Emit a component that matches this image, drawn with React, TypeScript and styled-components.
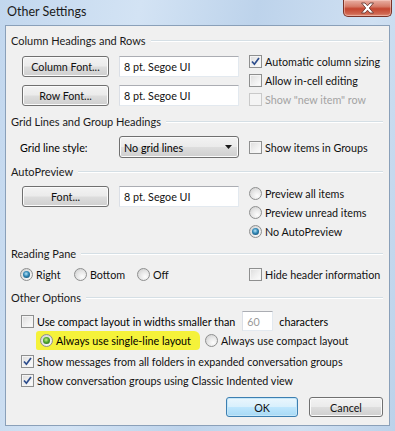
import { FC, ReactNode } from 'react'
import styled, { createGlobalStyle, css } from 'styled-components'

const GlobalStyle = createGlobalStyle`
  html, body {
    margin: 0;
    padding: 0;
    background: #ffffff;
  }

  body {
    font-family: Lato, 'Noto Sans', sans-serif;
    font-size: 10.75px;
    color: #000000;
  }
`

const Window = styled.div`
  width: 395px;
  height: 431px;
  display: flex;
  flex-direction: column;
  box-sizing: border-box;
  background: linear-gradient(100deg, #c2d7ee 0%, #d3e3f4 30%, #bdd3eb 55%, #cfe0f2 80%, #bcd2ea 100%);
`

const TitleBar = styled.div`
  height: 25px;
  display: flex;
  align-items: flex-start;
  flex-shrink: 0;
`

const Title = styled.span`
  padding: 4px 0 0 7px;
  font-size: 12.5px;
  color: #1b1b1b;
`

const CloseButton = styled.div`
  margin-left: auto;
  margin-right: 3px;
  width: 49px;
  height: 17px;
  box-sizing: border-box;
  border: 1px solid #7a3328;
  border-top: none;
  border-radius: 0 0 5px 5px;
  background: linear-gradient(180deg, #e9b0a4 0%, #d67c69 40%, #c4452f 55%, #cf6650 85%, #de8e78 100%);
  display: flex;
  align-items: center;
  justify-content: center;
  box-shadow: inset 0 0 0 1px rgba(255, 220, 210, 0.45);
`

const Client = styled.div`
  flex: 1;
  margin: 0 5px 5px 5px;
  border: 1px solid #8aa0b9;
  background: #f0f0f0;
  padding: 8px 6px 0 5px;
  display: flex;
  flex-direction: column;
`

const SectionHeader = styled.div<{ $gap: number }>`
  height: 14px;
  margin-top: ${({ $gap }) => $gap}px;
  display: flex;
  align-items: center;
  gap: 5px;
  line-height: 14px;
  font-size: 11px;
  color: #1a1a1a;

  &::after {
    content: '';
    flex: 1;
    height: 0;
    border-top: 1px solid #d5dfe5;
    border-bottom: 1px solid #ffffff;
  }
`

const Body = styled.div<{ $gap: number; $indent: number }>`
  margin-top: ${({ $gap }) => $gap}px;
  padding-left: ${({ $indent }) => $indent}px;
  display: flex;
  align-items: flex-start;
`

const LeftColumn = styled.div<{ $top: number }>`
  width: 217px;
  padding-top: ${({ $top }) => $top}px;
  margin-right: 10px;
  display: flex;
  flex-direction: column;
  gap: 8px;
  flex-shrink: 0;
`

const FontRow = styled.div`
  display: flex;
  gap: 10px;
`

const OptionList = styled.div`
  display: flex;
  flex-direction: column;
`

const OptionRow = styled.label<{ $disabled?: boolean }>`
  height: 19px;
  display: flex;
  align-items: center;
  gap: 3px;
  white-space: nowrap;
  color: ${({ $disabled }) => ($disabled ? '#a3a3a3' : '#111111')};
`

const PushButton = styled.button<{ $width: number; $height: number; $default?: boolean }>`
  width: ${({ $width }) => $width}px;
  height: ${({ $height }) => $height}px;
  padding: 0;
  font-family: Lato, 'Noto Sans', sans-serif;
  font-size: 10.75px;
  color: #111111;
  border: 1px solid #707070;
  border-radius: 3px;
  background: linear-gradient(180deg, #f3f3f3 0%, #ebebeb 48%, #dddddd 52%, #cfcfcf 100%);
  box-shadow: inset 0 0 0 1px #fbfbfb;
  flex-shrink: 0;

  ${({ $default }) =>
    $default &&
    css`
      border-color: #3c7fb1;
      background: linear-gradient(180deg, #eaf6fd 0%, #d9f0fc 48%, #bee6fd 52%, #a7d9f5 100%);
      box-shadow: inset 0 0 0 1px #c5e6f8;
    `}
`

const TextBox = styled.div<{ $width: number; $height: number; $muted?: boolean }>`
  width: ${({ $width }) => $width}px;
  height: ${({ $height }) => $height}px;
  box-sizing: border-box;
  padding-left: 4px;
  display: flex;
  align-items: center;
  background: #ffffff;
  border: 1px solid #e3e9ef;
  border-top-color: #abadb3;
  border-left-color: #dbdfe6;
  color: ${({ $muted }) => ($muted ? '#9a9a9a' : '#111111')};
  flex-shrink: 0;
`

const DropDown = styled.div`
  width: 120px;
  height: 22px;
  box-sizing: border-box;
  padding: 0 6px 0 4px;
  display: flex;
  align-items: center;
  justify-content: space-between;
  border: 1px solid #707070;
  border-radius: 3px;
  background: linear-gradient(180deg, #f3f3f3 0%, #ebebeb 48%, #dddddd 52%, #cfcfcf 100%);
  box-shadow: inset 0 0 0 1px #fbfbfb;
  flex-shrink: 0;
`

const FieldLabel = styled.span`
  width: 99px;
  flex-shrink: 0;
`

const InlineRow = styled.div<{ $height: number }>`
  height: ${({ $height }) => $height}px;
  display: flex;
  align-items: center;
  white-space: nowrap;
`

const RadioGroup = styled.div`
  width: 229px;
  display: flex;
  flex-shrink: 0;
`

const RadioSlot = styled.div<{ $width: number }>`
  width: ${({ $width }) => $width}px;
`

const Highlight = styled.div`
  width: 164px;
  height: 19px;
  margin-left: 15px;
  margin-right: 5px;
  padding-left: 4px;
  box-sizing: border-box;
  display: flex;
  align-items: center;
  gap: 3px;
  background: #f5f23a;
  border-radius: 3px 6px 4px 2px;
  white-space: nowrap;
`

const BoxFrame = styled.span<{ $disabled?: boolean }>`
  width: 13px;
  height: 13px;
  box-sizing: border-box;
  border: 1px solid ${({ $disabled }) => ($disabled ? '#c9c9c9' : '#8e8f8f')};
  background: ${({ $disabled }) =>
    $disabled ? '#f4f4f4' : 'linear-gradient(135deg, #dcdcdc 0%, #f0f0f0 55%, #fdfdfd 100%)'};
  box-shadow: inset 0 0 0 1px #f4f4f4;
  display: inline-flex;
  align-items: center;
  justify-content: center;
  flex-shrink: 0;
`

const RadioFrame = styled.span`
  width: 13px;
  height: 13px;
  box-sizing: border-box;
  border-radius: 50%;
  border: 1px solid #8e8f8f;
  background: radial-gradient(circle at 65% 70%, #fdfdfd 0%, #e6e6e6 50%, #c9c9c9 100%);
  display: inline-flex;
  align-items: center;
  justify-content: center;
  flex-shrink: 0;
`

const RadioDot = styled.span<{ $tint: 'blue' | 'green' }>`
  width: 7px;
  height: 7px;
  border-radius: 50%;
  background: ${({ $tint }) =>
    $tint === 'green'
      ? 'radial-gradient(circle at 45% 40%, #c9f08a 0%, #4fa62e 45%, #1f5a14 100%)'
      : 'radial-gradient(circle at 45% 40%, #b8e4f8 0%, #2f86b4 45%, #0e3c5e 100%)'};
`

const Gap = styled.span<{ $size: number }>`
  display: inline-block;
  width: ${({ $size }) => $size}px;
  flex-shrink: 0;
`

const Spacer = styled.div<{ $size: number }>`
  height: ${({ $size }) => $size}px;
`

const ButtonRow = styled.div`
  margin-top: 7px;
  display: flex;
  justify-content: flex-end;
  gap: 11px;
`

const CheckBox: FC<{ checked?: boolean; disabled?: boolean }> = ({ checked, disabled }) => (
  <BoxFrame $disabled={disabled}>
    {checked && (
      <svg width="9" height="9" viewBox="0 0 9 9">
        <path d="M1 4.5 L3.4 7.2 L8 1" fill="none" stroke="#2c4c8c" strokeWidth="1.7" />
      </svg>
    )}
  </BoxFrame>
)

const Radio: FC<{ checked?: boolean; tint?: 'blue' | 'green' }> = ({ checked, tint = 'blue' }) => (
  <RadioFrame>{checked && <RadioDot $tint={tint} />}</RadioFrame>
)

const CheckOption: FC<{ checked?: boolean; disabled?: boolean; children: ReactNode }> = ({
  checked,
  disabled,
  children
}) => (
  <OptionRow $disabled={disabled}>
    <CheckBox checked={checked} disabled={disabled} />
    {children}
  </OptionRow>
)

const RadioOption: FC<{ checked?: boolean; children: ReactNode }> = ({ checked, children }) => (
  <OptionRow>
    <Radio checked={checked} />
    {children}
  </OptionRow>
)

const App = () => (
  <>
    <GlobalStyle />
    <Window>
      <TitleBar>
        <Title>Other Settings</Title>
        <CloseButton>
          <svg width="15" height="12" viewBox="0 0 15 12">
            <path
              d="M1.5 1 H5 L7.5 3.8 L10 1 H13.5 L9.3 6 L13.5 11 H10 L7.5 8.2 L5 11 H1.5 L5.7 6 Z"
              fill="#ffffff"
              stroke="#6a3a34"
              strokeWidth="0.9"
              strokeLinejoin="round"
            />
          </svg>
        </CloseButton>
      </TitleBar>

      <Client>
        <SectionHeader $gap={0}>Column Headings and Rows</SectionHeader>
        <Body $gap={4} $indent={11}>
          <LeftColumn $top={4}>
            <FontRow>
              <PushButton $width={87} $height={21}>Column Font...</PushButton>
              <TextBox $width={120} $height={21}>8 pt. Segoe UI</TextBox>
            </FontRow>
            <FontRow>
              <PushButton $width={87} $height={21}>Row Font...</PushButton>
              <TextBox $width={120} $height={21}>8 pt. Segoe UI</TextBox>
            </FontRow>
          </LeftColumn>
          <OptionList>
            <CheckOption checked>Automatic column sizing</CheckOption>
            <CheckOption>Allow in-cell editing</CheckOption>
            <CheckOption disabled>Show "new item" row</CheckOption>
          </OptionList>
        </Body>

        <SectionHeader $gap={6}>Grid Lines and Group Headings</SectionHeader>
        <Body $gap={7} $indent={9}>
          <InlineRow $height={22}>
            <FieldLabel>Grid line style:</FieldLabel>
            <DropDown>
              No grid lines
              <svg width="7" height="4" viewBox="0 0 7 4">
                <path d="M0 0 H7 L3.5 4 Z" fill="#1a1a1a" />
              </svg>
            </DropDown>
            <Gap $size={10} />
            <OptionRow>
              <CheckBox />
              Show items in Groups
            </OptionRow>
          </InlineRow>
        </Body>

        <SectionHeader $gap={7}>AutoPreview</SectionHeader>
        <Body $gap={5} $indent={11}>
          <LeftColumn $top={2}>
            <FontRow>
              <PushButton $width={87} $height={21}>Font...</PushButton>
              <TextBox $width={120} $height={21}>8 pt. Segoe UI</TextBox>
            </FontRow>
          </LeftColumn>
          <OptionList>
            <RadioOption>Preview all items</RadioOption>
            <RadioOption>Preview unread items</RadioOption>
            <RadioOption checked>No AutoPreview</RadioOption>
          </OptionList>
        </Body>

        <SectionHeader $gap={6}>Reading Pane</SectionHeader>
        <Body $gap={4} $indent={9}>
          <RadioGroup>
            <RadioSlot $width={54}>
              <RadioOption checked>Right</RadioOption>
            </RadioSlot>
            <RadioSlot $width={63}>
              <RadioOption>Bottom</RadioOption>
            </RadioSlot>
            <RadioSlot $width={60}>
              <RadioOption>Off</RadioOption>
            </RadioSlot>
          </RadioGroup>
          <CheckOption>Hide header information</CheckOption>
        </Body>

        <SectionHeader $gap={7}>Other Options</SectionHeader>
        <Body $gap={6} $indent={10}>
          <OptionList>
            <InlineRow $height={20}>
              <CheckBox />
              <Gap $size={3} />
              Use compact layout in widths smaller than
              <Gap $size={7} />
              <TextBox $width={31} $height={20} $muted>
                60
              </TextBox>
              <Gap $size={6} />
              characters
            </InlineRow>
            <InlineRow $height={19}>
              <Highlight>
                <Radio checked tint="green" />
                Always use single-line layout
              </Highlight>
              <RadioOption>Always use compact layout</RadioOption>
            </InlineRow>
            <Spacer $size={2} />
            <CheckOption checked>Show messages from all folders in expanded conversation groups</CheckOption>
            <CheckOption checked>Show conversation groups using Classic Indented view</CheckOption>
          </OptionList>
        </Body>

        <ButtonRow>
          <PushButton $width={72} $height={20} $default>
            OK
          </PushButton>
          <PushButton $width={74} $height={20}>
            Cancel
          </PushButton>
        </ButtonRow>
      </Client>
    </Window>
  </>
)

export default App
